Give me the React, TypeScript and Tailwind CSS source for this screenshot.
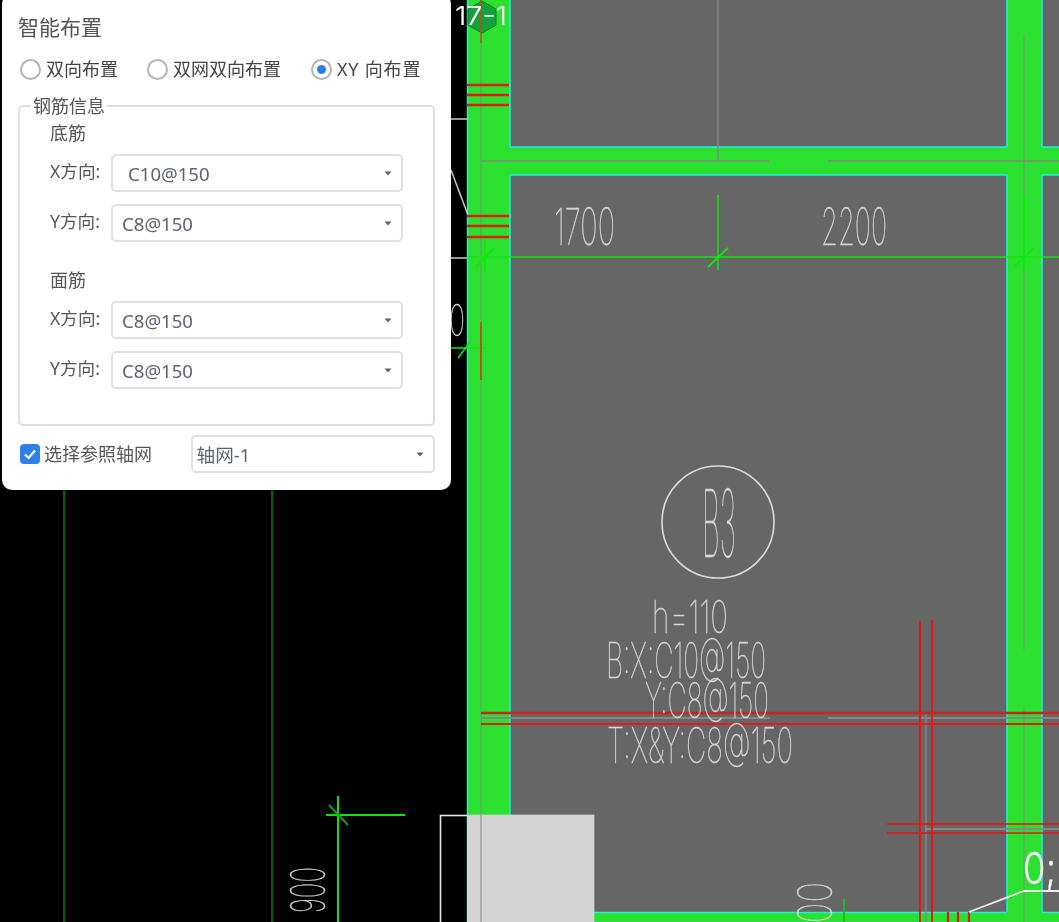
const CJK = "font-['Noto_Sans','Noto_Sans_CJK_SC',sans-serif]";

function Caret() {
  return (
    <svg width="8" height="5" viewBox="0 0 8 5" className="shrink-0">
      <path d="M0.5 0.5H7.5L4 4.5Z" fill="#5f6368" />
    </svg>
  );
}

function Select({ value, indent = 'pl-[9px]', width = 'w-[292px]' }: { value: string; indent?: string; width?: string }) {
  return (
    <div className={`${width} h-[38px] flex items-center justify-between ${indent} pr-[9px] bg-white border-2 border-[#e0e0e0] rounded-[5px] text-[18.6px] text-[#5c6470]`}>
      <span className="pt-[2px]">{value}</span>
      <Caret />
    </div>
  );
}

function Radio({ label, checked = false, className = '', labelClass = '' }: { label: string; checked?: boolean; className?: string; labelClass?: string }) {
  return (
    <div className={`flex items-center gap-[5px] ${className}`}>
      <span className="w-[21px] h-[21px] rounded-full border-2 border-[#b4b4b4] flex items-center justify-center">
        {checked && <span className="w-[9px] h-[9px] rounded-full bg-[#2b7de9]" />}
      </span>
      <span className={`text-[18px] leading-none text-[#444] ${labelClass}`}>{label}</span>
    </div>
  );
}

function Row({ axis, value, indent, className = '' }: { axis: string; value: string; indent?: string; className?: string }) {
  return (
    <div className={`flex items-center ${className}`}>
      <span className="w-[61px] text-[17.6px] text-[#555] leading-none mb-[3px] whitespace-nowrap">{axis}</span>
      <Select value={value} indent={indent} />
    </div>
  );
}

function CadText({ x, y, w, size, children, fill = '#d6d6d6', rotate, weight = 100, stroke = 0.45 }: { x: number; y: number; w: number; size: number; children: string; fill?: string; rotate?: number; weight?: number; stroke?: number }) {
  return (
    <text
      x={x}
      y={y}
      textLength={w}
      lengthAdjust="spacingAndGlyphs"
      fontSize={size}
      fontFamily="Inter, 'Liberation Sans', sans-serif"
      fontWeight={weight}
      fill={fill}
      stroke={fill}
      strokeWidth={stroke}
      transform={rotate ? `rotate(${rotate} ${x} ${y})` : undefined}
    >
      {children}
    </text>
  );
}

function Drawing() {
  const G = '#2be02f';
  const C = '#1cf0e4';
  const CL = '#868686';
  const R = '#f01010';
  const line = (x1: number, y1: number, x2: number, y2: number, c: string, w = 1.5) => (
    <line key={`${x1}-${y1}-${x2}-${y2}-${c}`} x1={x1} y1={y1} x2={x2} y2={y2} stroke={c} strokeWidth={w} />
  );
  return (
    <svg width="1059" height="922" viewBox="0 0 1059 922" className="absolute inset-0 block blur-[0.35px]">
      <rect x="0" y="0" width="1059" height="922" fill="#000" />
      <rect x="467" y="0" width="592" height="922" fill="#666666" />
      {/* beams */}
      <rect x="467" y="0" width="43" height="922" fill={G} />
      <rect x="1007" y="0" width="35" height="922" fill={G} />
      <rect x="467" y="147" width="592" height="28" fill={G} />
      <rect x="467" y="912" width="592" height="10" fill={G} />
      {line(467.5, 0, 467.5, 922, C)}
      {line(510, 0, 510, 147, C)}
      {line(510, 147, 1007, 147, C)}
      {line(1007, 0, 1007, 147, C)}
      {line(1042, 0, 1042, 147, C)}
      {line(1042, 147, 1059, 147, C)}
      {line(510, 175, 510, 912, C)}
      {line(510, 175, 1007, 175, C)}
      {line(1007, 175, 1007, 912, C)}
      {line(1042, 175, 1042, 912, C)}
      {line(1042, 175, 1059, 175, C)}
      {line(510, 912.5, 1007, 912.5, C)}
      {line(1042, 912.5, 1059, 912.5, C)}
      {/* centre lines */}
      {line(481, 0, 481, 922, CL, 1)}
      {line(481, 161, 769, 161, CL)}
      {line(828, 161, 1059, 161, CL)}
      {line(718, 0, 718, 161, CL)}
      {line(1024, 35, 1024, 195, CL, 1)}
      {line(1024, 270, 1024, 650, CL, 1)}
      {line(1024, 708, 1024, 922, CL, 1)}
      {line(481, 718, 770, 718, CL, 2)}
      {line(828, 718, 1059, 718, CL, 2)}
      {line(926, 713, 926, 922, CL)}
      {line(925, 829, 1059, 829, CL, 2)}
      {/* axis lines */}
      {line(64, 490, 64, 922, '#008a00')}
      {line(272, 490, 272, 922, '#008a00')}
      {line(467, 257, 1059, 257, '#10e810')}
      {line(718, 195, 718, 270, '#10e810')}
      {line(708, 267, 728, 248, '#10e810', 1.8)}
      {line(485, 240, 485, 272, '#10e810', 2)}
      {line(476, 267, 494, 248, '#10e810', 2)}
      {line(1024, 195, 1024, 270, '#10e810', 2)}
      {line(1014, 267, 1034, 248, '#10e810', 2)}
      {line(338, 796, 338, 922, '#12e012', 2)}
      {line(326, 815, 405, 815, '#12e012', 2)}
      {line(329, 805, 348, 825, '#10a010', 2)}
      {line(451, 348, 487, 348, '#10e810')}
      {line(458, 358, 470, 342, '#10e810')}
      {line(844, 899, 844, 922, '#25b525', 2)}
      {/* left white leaders */}
      {line(440, 119, 467, 119, '#c8c8c8')}
      {line(440, 258, 467, 258, '#c8c8c8')}
      {line(451, 170, 468, 215, '#c8c8c8')}
      {/* red bars */}
      {[85, 95, 105, 216, 226, 237].map((y) => line(467, y, 509, y, '#e01c10', 2.4))}
      {line(481, 322, 481, 380, '#c84a10', 1.8)}
      {line(920, 621, 920, 922, R, 1.8)}
      {line(932, 620, 932, 922, R, 1.8)}
      {line(481, 713, 1059, 713, '#cc2222', 2.4)}
      {line(481, 724, 1059, 724, '#e81818', 2)}
      {line(887, 824, 1059, 824, R)}
      {line(887, 833, 1059, 833, R)}
      {[948, 958, 969].map((x) => line(x, 912, x, 922, R, 2.2))}
      {/* grey block */}
      <rect x="440.5" y="815.5" width="153" height="120" fill="none" stroke="#e6e6e6" strokeWidth="1.6" />
      <rect x="467" y="815" width="127" height="107" fill="#d4d4d4" />
      {line(481, 815, 481, 922, '#ababab', 2)}
      {/* axis badge */}
      <polygon points="482,1 496,9 496,25 482,33 468,25 468,9" fill="#14a03a" stroke="#0c7a2a" strokeWidth="1" />
      {line(481, 0, 481, 43, '#c84a10', 1.5)}
      <CadText x={455} y={25} w={52} size={26} fill="#ffffff" weight={300} stroke={0.2}>17-1</CadText>
      {/* slab label */}
      <circle cx="718" cy="522" r="56" fill="none" stroke="#dcdcdc" strokeWidth="1.6" />
      <CadText x={702} y={557} w={34} size={93}>B3</CadText>
      <CadText x={652} y={633} w={76} size={45}>h=110</CadText>
      <CadText x={606} y={678} w={160} size={49}>B:X:C10@150</CadText>
      <CadText x={645} y={718} w={124} size={49}>Y:C8@150</CadText>
      <CadText x={607} y={763} w={186} size={49}>T:X&amp;Y:C8@150</CadText>
      <CadText x={554} y={245} w={61} size={51}>1700</CadText>
      <CadText x={821} y={245} w={66} size={51}>2200</CadText>
      <CadText x={325} y={913} w={46} size={47} rotate={-90}>900</CadText>
      <CadText x={832} y={936} w={54} size={47} rotate={-90}>100</CadText>
      <CadText x={449} y={336} w={16} size={44}>0</CadText>
      <CadText x={1023} y={884} w={33} size={44} fill="#f4f4f4" weight={300} stroke={0.3}>0;</CadText>
      <polyline points="969,912 1024,891 1059,891" fill="none" stroke="#f0f0f0" strokeWidth="1.8" />
    </svg>
  );
}

export default function App() {
  return (
    <div className={`relative w-[1059px] h-[922px] overflow-hidden bg-black ${CJK}`}>
      <Drawing />
      <div className="absolute left-[2px] top-[-6px] w-[449px] h-[496px] bg-white rounded-[10px] flex flex-col px-[16px] pt-[20px] blur-[0.3px]">
        <div className="text-[21px] leading-[26px] text-[#555]">智能布置</div>
        <div className="flex items-center mt-[17px] pl-[2px] h-[24px]">
          <Radio label="双向布置" />
          <Radio label="双网双向布置" className="ml-[29px]" />
          <Radio label="XY 向布置" checked className="ml-[30px]" labelClass="tracking-[0.8px]" />
        </div>
        <div className="relative mt-[24px] w-[417px] h-[321px] border-2 border-[#dedede] rounded-[5px] pl-[30px] pt-[14px]">
          <span className="absolute left-[11px] top-[-13px] px-[2px] bg-white text-[18px] leading-[24px] text-[#555]">钢筋信息</span>
          <div className="text-[18px] leading-[24px] text-[#555]">底筋</div>
          <Row axis="X方向:" value="C10@150" indent="pl-[15px]" className="mt-[9px]" />
          <Row axis="Y方向:" value="C8@150" className="mt-[12px]" />
          <div className="text-[18px] leading-[24px] text-[#555] mt-[26px]">面筋</div>
          <Row axis="X方向:" value="C8@150" className="mt-[9px]" />
          <Row axis="Y方向:" value="C8@150" className="mt-[12px]" />
        </div>
        <div className="flex items-center mt-[9px] pl-[2px]">
          <span className="w-[20px] h-[20px] rounded-[4px] bg-[#2f80ed] flex items-center justify-center">
            <svg width="14" height="14" viewBox="0 0 14 14">
              <path d="M2 7.5L5.5 11L12 3.5" fill="none" stroke="#fff" strokeWidth="2.2" />
            </svg>
          </span>
          <span className="ml-[4px] w-[147px] text-[18px] text-[#555] leading-none">选择参照轴网</span>
          <Select value="轴网-1" indent="pl-[4px]" width="w-[245px]" />
        </div>
      </div>
    </div>
  );
}
